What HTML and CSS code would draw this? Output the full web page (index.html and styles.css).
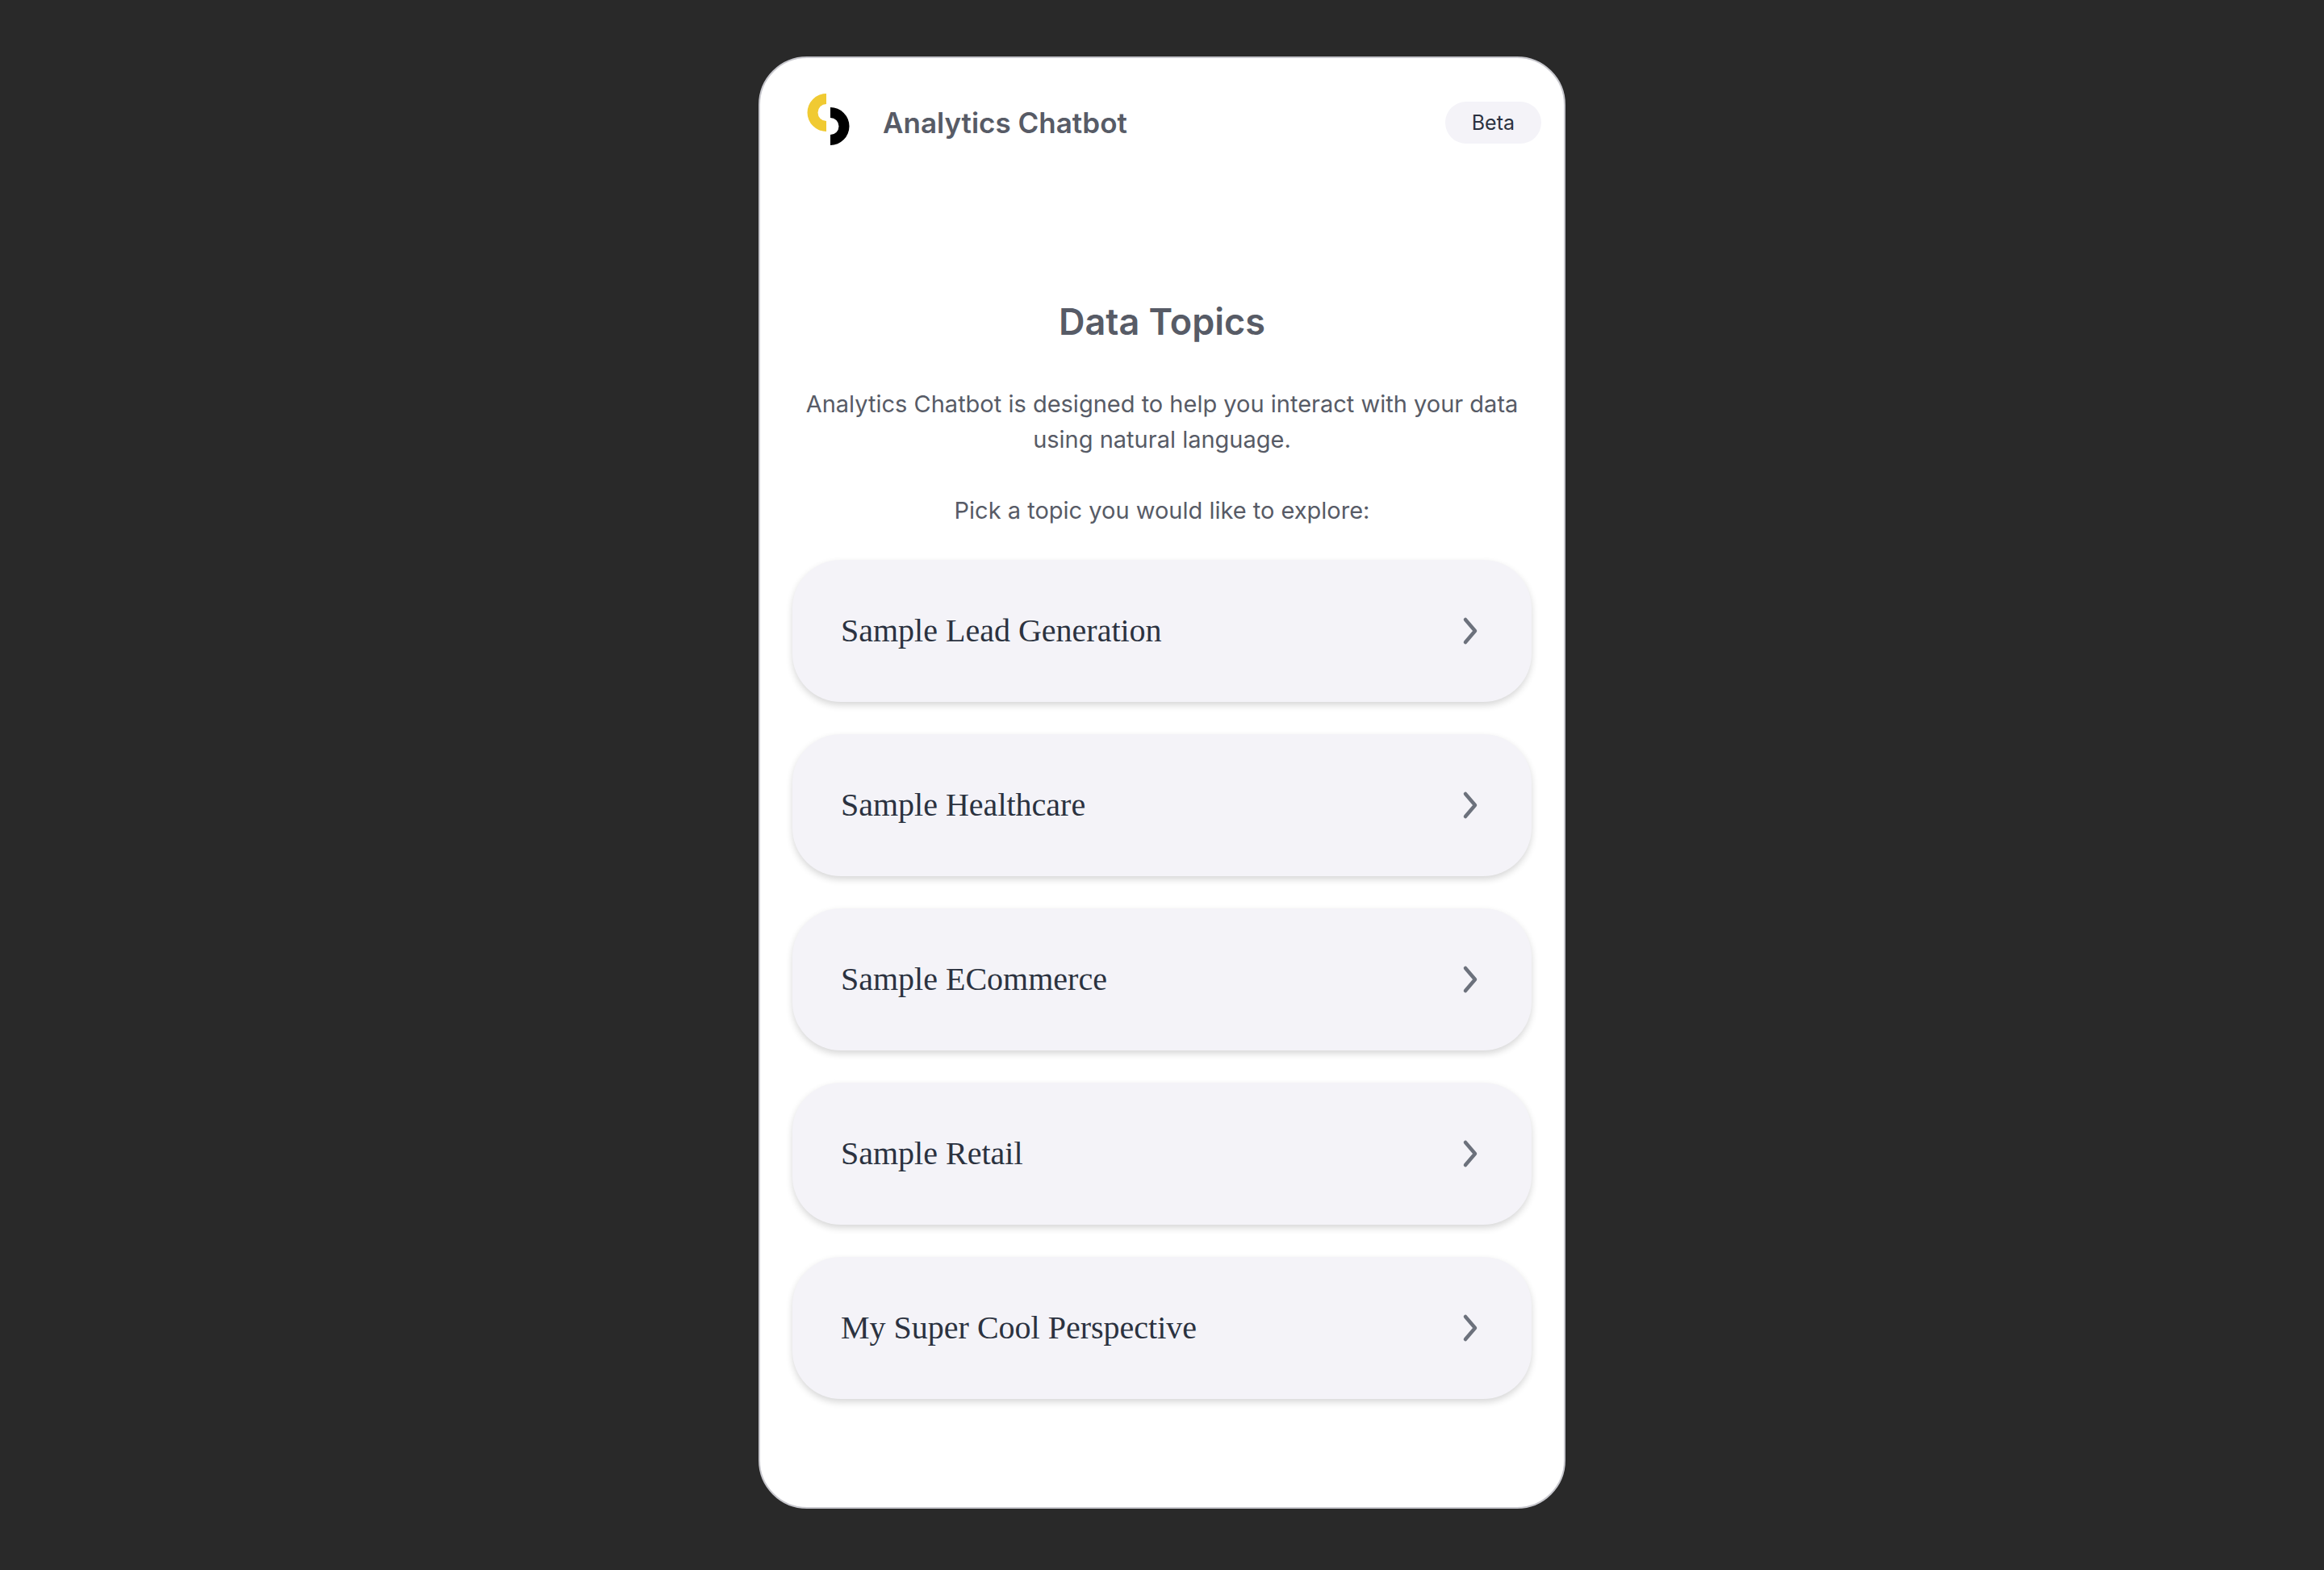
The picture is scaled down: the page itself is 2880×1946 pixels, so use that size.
FILE: index.html
```html
<!DOCTYPE html>
<html lang="en">
<head>
<meta charset="utf-8">
<meta name="viewport" content="width=device-width, initial-scale=1">
<title>Analytics Chatbot</title>
<link rel="stylesheet" href="styles.css">
</head>
<body>
<main class="panel">
  <header class="header">
    <svg class="logo" viewBox="0 0 54 64" aria-hidden="true">
      <path fill="#f0ca32" d="M24 0A23.5 23.5 0 0 0 24 47V34A10.5 10.5 0 0 1 24 13Z"/>
      <path fill="#000" d="M29 17A23.5 23.5 0 0 1 29 64V51A10.5 10.5 0 0 0 29 30Z"/>
    </svg>
    <h1 class="title">Analytics Chatbot</h1>
    <span class="badge">Beta</span>
  </header>
  <section class="intro">
    <h2 class="heading">Data Topics</h2>
    <p class="text">Analytics Chatbot is designed to help you interact with your data using natural language.</p>
    <p class="text">Pick a topic you would like to explore:</p>
  </section>
  <div class="topics">
    <button class="topic" type="button">Sample Lead Generation<svg class="chevron" viewBox="0 0 16 32" aria-hidden="true"><path d="M2 2L14 16L2 30"/></svg></button>
    <button class="topic" type="button">Sample Healthcare<svg class="chevron" viewBox="0 0 16 32" aria-hidden="true"><path d="M2 2L14 16L2 30"/></svg></button>
    <button class="topic" type="button">Sample ECommerce<svg class="chevron" viewBox="0 0 16 32" aria-hidden="true"><path d="M2 2L14 16L2 30"/></svg></button>
    <button class="topic" type="button">Sample Retail<svg class="chevron" viewBox="0 0 16 32" aria-hidden="true"><path d="M2 2L14 16L2 30"/></svg></button>
    <button class="topic" type="button">My Super Cool Perspective<svg class="chevron" viewBox="0 0 16 32" aria-hidden="true"><path d="M2 2L14 16L2 30"/></svg></button>
  </div>
</main>
</body>
</html>
```

FILE: styles.css
```css
* {
  box-sizing: border-box;
}

body {
  margin: 0;
  padding: 70px 20px;
  background: #292929;
  color: #575b66;
  font-family: Inter, "Liberation Sans", sans-serif;
}

.panel {
  max-width: 1000px;
  margin: 0 auto;
  padding-bottom: 134px;
  background: #fff;
  border: 2px solid #c8c8ce;
  border-radius: 60px;
}

.header {
  display: flex;
  align-items: center;
  padding: 44px 28px 0 58px;
}

.logo {
  width: 54px;
  height: 64px;
  margin-right: 40px;
}

.title {
  margin: 8px 0 0;
  font-size: 35px;
  line-height: 44px;
  font-weight: 600;
}

.badge {
  margin: 8px 0 0 auto;
  padding: 0 33px;
  border-radius: 26px;
  background: #f4f3f8;
  color: #2b3240;
  font-size: 25px;
  line-height: 52px;
}

.intro {
  padding: 189px 40px 0;
  text-align: center;
}

.heading {
  margin: 0 0 50px;
  font-size: 45px;
  line-height: 60px;
  font-weight: 600;
}

.text {
  margin: 0 0 44px;
  font-size: 29px;
  line-height: 44px;
}

.text:last-child {
  margin-bottom: 39px;
}

.topics {
  display: flex;
  flex-direction: column;
  gap: 40px;
  padding: 0 40px;
}

.topic {
  display: flex;
  align-items: center;
  justify-content: space-between;
  padding: 64px 68px 64px 60px;
  border: 0;
  border-radius: 60px;
  background: #f4f3f8;
  box-shadow: 0 4px 8px rgba(0, 0, 0, 0.16);
  color: #2b3240;
  font-family: "Liberation Serif", serif;
  font-size: 40px;
  line-height: 48px;
  text-align: left;
  cursor: pointer;
}

.chevron {
  flex: none;
  width: 16px;
  height: 32px;
  overflow: visible;
  fill: none;
  stroke: #6c717c;
  stroke-width: 4.5;
  stroke-linecap: round;
  stroke-linejoin: round;
}
```
